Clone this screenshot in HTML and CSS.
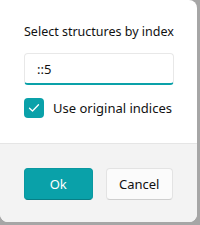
FILE: index.html
```html
<!DOCTYPE html>
<html lang="en">
<head>
    <meta charset="UTF-8">
    <title>Select structures by index</title>
    <link rel="stylesheet" href="styles.css">
</head>
<body>
    <div class="dialog">
        <div class="dialog-body">
            <label class="field-label" for="index">Select structures by index</label>
            <input type="text" id="index" class="text-input" value="::5">
            <label class="check-row">
                <span class="check-box">
                    <svg width="12" height="10" viewBox="0 0 12 10"><path d="M1.5 5.2 L4.5 8 L10.5 1.8" fill="none" stroke="#fff" stroke-width="1.3" stroke-linecap="round" stroke-linejoin="round"/></svg>
                </span>
                <span>Use original indices</span>
            </label>
        </div>
        <div class="dialog-footer">
            <button class="btn btn-primary">Ok</button>
            <button class="btn btn-secondary">Cancel</button>
        </div>
    </div>
</body>
</html>
```

FILE: styles.css
```css
* { margin: 0; padding: 0; box-sizing: border-box; }
body {
    font-family: "Noto Sans", "Open Sans", sans-serif;
    font-size: 12.5px;
    color: #111;
    background: #a6a6a6;
}
.dialog {
    width: 197px;
    height: 222px;
    background: #fff;
    border-radius: 0 8px 8px 8px;
    overflow: hidden;
    display: flex;
    flex-direction: column;
}
.dialog-body {
    padding: 24px 24px 0;
    height: 143px;
    display: flex;
    flex-direction: column;
}
.field-label { display: block; line-height: 16px; white-space: nowrap; }
.text-input {
    margin-top: 13px;
    width: 150px;
    height: 32px;
    border: 1px solid #e8e8e8;
    border-bottom: 2px solid #0aa1a9;
    border-radius: 4px;
    padding: 0 12px;
    font-family: inherit;
    font-size: 13px;
    color: #111;
    outline: none;
}
.check-row {
    margin-top: 13px;
    display: flex;
    align-items: center;
    gap: 9px;
    font-size: 13px;
    white-space: nowrap;
}
.check-box {
    width: 20px;
    height: 20px;
    border-radius: 4px;
    background: #0aa1a9;
    display: flex;
    align-items: center;
    justify-content: center;
}
.dialog-footer {
    flex: 1;
    background: #f3f3f3;
    border-top: 1px solid #e5e5e5;
    padding: 24px 24px 0;
    display: flex;
    gap: 13px;
}
.btn {
    height: 32px;
    border-radius: 4px;
    font-family: inherit;
    font-size: 13px;
}
.btn-primary {
    width: 69px;
    background: #0aa1a9;
    color: #fff;
    border: 1px solid #0a98a0;
    border-bottom-color: #087f86;
}
.btn-secondary {
    width: 68px;
    background: #fbfbfb;
    color: #111;
    border: 1px solid #e3e3e3;
    border-bottom-color: #cfcfcf;
}
```
